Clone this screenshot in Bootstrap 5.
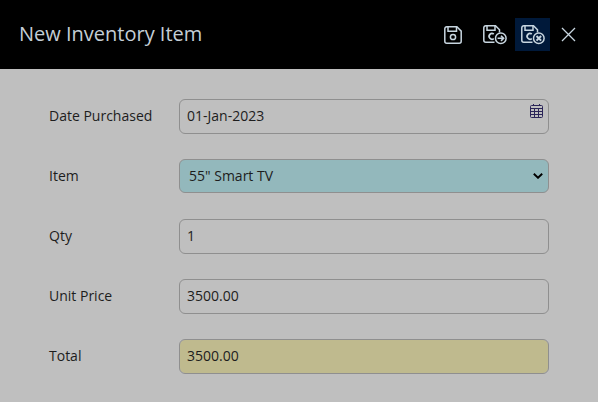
<!DOCTYPE html>
<html lang="en">
<head>
<meta charset="utf-8">
<title>New Inventory Item</title>
<link href="https://cdn.jsdelivr.net/npm/bootstrap@5.3.0/dist/css/bootstrap.min.css" rel="stylesheet">
<style>
html,body{height:100%;overflow:hidden}
body{background:#bfbfbf;font-family:"Open Sans","Noto Sans",sans-serif;color:#212121;font-size:14px}
.hdr{background:#000;height:69px;padding:0 12px 0 19px}
.hdr-title{font-size:20px;color:#c4ced6;font-weight:400;margin:0;padding-bottom:2px}
.tool{width:35px;height:33px;padding:0;border:0;background:transparent;display:flex;align-items:center;justify-content:center;color:#c8d6e0}
.tool.on{background:#00193a}
.tool-a{margin-right:7px}
.tool-b{margin-right:3px}
.tool-c{margin-right:1px}
.form-area{padding:30px 49px 0 49px}
.frow{height:35px;margin-bottom:25px}
.lbl{width:130px;flex:none;font-size:14px;color:#1d1d1d;padding-bottom:2px}
.fld{flex:1 1 auto;height:35px;background-color:#bfbfbf;border:1px solid #8f8f8f;border-radius:6px;color:#1d1d1d;font-size:14px;padding:0 7px 2px;box-shadow:none}
.fld:focus{background-color:#bfbfbf;border-color:#8f8f8f;box-shadow:none;color:#1d1d1d}
select.fld,select.fld:focus{height:34px;align-self:flex-start;background-color:#93b8bc;padding:0 24px 1px 9px;background-image:url("data:image/svg+xml,%3Csvg xmlns='http://www.w3.org/2000/svg' viewBox='0 0 10 6'%3E%3Cpath d='M.8.8 5 4.8 9.2.8' fill='none' stroke='%23000' stroke-width='1.9'/%3E%3C/svg%3E");background-position:right 5px center;background-size:10px 6px}
.fld.tot,.fld.tot:focus{background-color:#bfba8e}
.pick{position:absolute;right:6px;top:5px;color:#2a2458}
</style>
</head>
<body>
<div class="hdr d-flex align-items-center justify-content-between">
  <h1 class="hdr-title">New Inventory Item</h1>
  <div class="d-flex align-items-center">
    <button class="tool tool-a" aria-label="Save"><svg width="18" height="18" viewBox="0 0 18 18" fill="none" stroke="currentColor" stroke-width="1.5"><path d="M.8 2.8a2 2 0 0 1 2-2h10.1l4.3 4.3v10.1a2 2 0 0 1-2 2H2.800a2 2 0 0 1-2-2z"/><path d="M4 .9v4.3h8.500V.9"/><circle cx="9" cy="11" r="2.600"/></svg></button>
    <button class="tool tool-b" aria-label="Save and copy"><svg width="24" height="20" viewBox="0 0 24 20" fill="none" stroke="currentColor" stroke-width="1.5"><path d="M11.5 17.200H2.800a2 2 0 0 1-2-2V2.800a2 2 0 0 1 2-2h9.700L16.500 4.800V7.500"/><path d="M4 .9v4.300h8V.9"/><path d="M10.800 9a2.900 2.900 0 1 0 0 4.600" stroke-width="1.7"/><circle cx="17.800" cy="13.300" r="5.300"/><path d="M14.600 13.300h6M18 10.700l2.600 2.600-2.600 2.600" stroke-width="1.600"/></svg></button>
    <button class="tool on tool-c" aria-label="Save and close"><svg width="24" height="20" viewBox="0 0 24 20" fill="none" stroke="currentColor" stroke-width="1.5"><path d="M11.500 17.200H2.800a2 2 0 0 1-2-2V2.800a2 2 0 0 1 2-2h9.700L16.500 4.800V7.500"/><path d="M4 .9v4.300h8V.9"/><path d="M10.800 9a2.900 2.900 0 1 0 0 4.600" stroke-width="1.700"/><circle cx="17.800" cy="13.300" r="5.300"/><path d="M15.500 11l4.600 4.600M20.100 11l-4.600 4.600" stroke-width="2"/></svg></button>
    <button class="tool" aria-label="Close"><svg width="15" height="15" viewBox="0 0 15 15" fill="none" stroke="currentColor" stroke-width="1.300"><path d="M1 1l13 13M14 1L1 14"/></svg></button>
  </div>
</div>
<form class="form-area">
  <div class="frow d-flex align-items-center">
    <label class="lbl" for="f1">Date Purchased</label>
    <div class="position-relative d-flex flex-grow-1">
      <input id="f1" class="form-control fld" value="01-Jan-2023">
      <svg class="pick" width="13" height="14" viewBox="0 0 13 14" fill="none" stroke="currentColor" stroke-width="1"><rect x=".5" y="1.500" width="12" height="12" rx="1"/><path d="M.5 4.500h12M.5 7.500h12M.5 10.500h12M4.500 4.500v9M8.500 4.500v9"/><path d="M3.500 0v2M9.500 0v2"/></svg>
    </div>
  </div>
  <div class="frow d-flex align-items-center">
    <label class="lbl" for="f2">Item</label>
    <select id="f2" class="form-select fld"><option>55" Smart TV</option></select>
  </div>
  <div class="frow d-flex align-items-center">
    <label class="lbl" for="f3">Qty</label>
    <input id="f3" class="form-control fld" value="1">
  </div>
  <div class="frow d-flex align-items-center">
    <label class="lbl" for="f4">Unit Price</label>
    <input id="f4" class="form-control fld" value="3500.00">
  </div>
  <div class="frow d-flex align-items-center">
    <label class="lbl" for="f5">Total</label>
    <input id="f5" class="form-control fld tot" value="3500.00">
  </div>
</form>
<script src="https://cdn.jsdelivr.net/npm/bootstrap@5.3.0/dist/js/bootstrap.bundle.min.js"></script>
</body>
</html>
